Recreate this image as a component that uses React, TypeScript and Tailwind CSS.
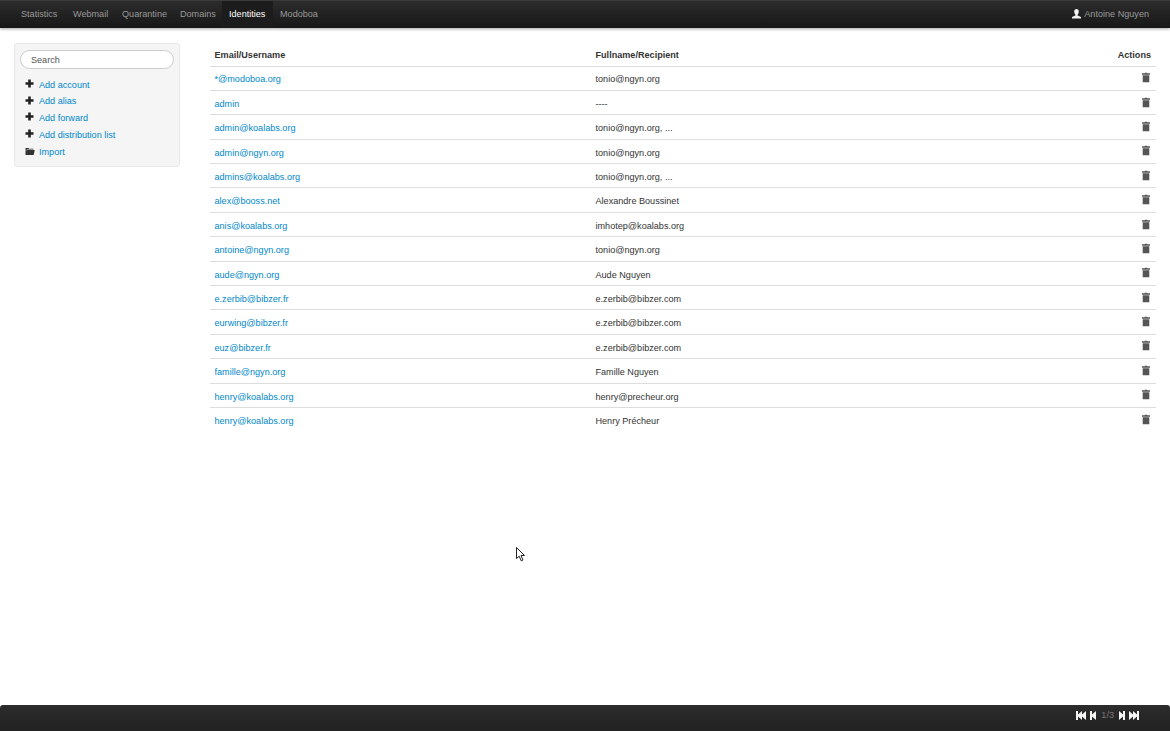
import React from 'react';

const font = { fontFamily: '"Liberation Sans", Arial, sans-serif' };

const navItems = [
  { label: 'Statistics', cls: 'w-[52px] text-[#999]' },
  { label: 'Webmail', cls: 'w-[49px] text-[#999]' },
  { label: 'Quarantine', cls: 'w-[58px] text-[#999]' },
  { label: 'Domains', cls: 'w-[49px] text-[#999]' },
  { label: 'Identities', cls: 'w-[51px] bg-[#1c1c1c] text-white' },
  { label: 'Modoboa', cls: 'w-[52px] text-[#999]' },
];

const rows = [
  ['*@modoboa.org', 'tonio@ngyn.org'],
  ['admin', '----'],
  ['admin@koalabs.org', 'tonio@ngyn.org, ...'],
  ['admin@ngyn.org', 'tonio@ngyn.org'],
  ['admins@koalabs.org', 'tonio@ngyn.org, ...'],
  ['alex@booss.net', 'Alexandre Boussinet'],
  ['anis@koalabs.org', 'imhotep@koalabs.org'],
  ['antoine@ngyn.org', 'tonio@ngyn.org'],
  ['aude@ngyn.org', 'Aude Nguyen'],
  ['e.zerbib@bibzer.fr', 'e.zerbib@bibzer.com'],
  ['eurwing@bibzer.fr', 'e.zerbib@bibzer.com'],
  ['euz@bibzer.fr', 'e.zerbib@bibzer.com'],
  ['famille@ngyn.org', 'Famille Nguyen'],
  ['henry@koalabs.org', 'henry@precheur.org'],
  ['henry@koalabs.org', 'Henry Précheur'],
];

const PlusIcon = () => (
  <svg width="9" height="9" viewBox="0 0 9 9" className="shrink-0 -translate-y-[2px]">
    <path d="M3.2 0.5h2.6v2.7h2.7v2.6H5.800v2.700H3.200V5.800H.5V3.200h2.700z" fill="#222" />
  </svg>
);

const FolderIcon = () => (
  <svg width="10" height="9" viewBox="0 0 10 9" className="shrink-0 -translate-y-[1px]">
    <path d="M0.500 2V1h3l.6.8h4.400v.7H2L.5 3.500z" fill="#333" />
    <path d="M2 3h7.700L8.700 8H.5V3.800z" fill="#333" />
  </svg>
);

const TrashIcon = () => (
  <svg width="8" height="10" viewBox="0 0 8 10">
    <path d="M2.800 0h2.400v.8H8v1.400H0V.8h2.800z" fill="#555" />
    <path d="M.7 2.800h6.600V10H.7z" fill="#555" />
  </svg>
);

const UserIcon = () => (
  <svg width="9" height="10" viewBox="0 0 9 10" className="shrink-0 -translate-y-[1px]">
    <path d="M4.500 0C6 0 6.800 1 6.800 2.600S6 5.500 5.600 5.800v.8L9 8v1.500H0V8l3.400-1.400v-.8C3 5.500 2.200 4.200 2.200 2.600S3 0 4.500 0z" fill="#f2f2f2" />
  </svg>
);

const SkipIcon = ({ flip, double }: { flip?: boolean; double?: boolean }) => (
  <svg width={double ? 10 : 6} height="9" viewBox={double ? '0 0 10 9' : '0 0 6 9'} style={flip ? { transform: 'scaleX(-1)' } : undefined}>
    {double ? (
      <path d="M0 0h2v3.500L6 0v3.500L10 0v9L6 5.500V9L2 5.500V9H0z" fill="#f5f5f5" />
    ) : (
      <path d="M0 0h2v3.500L6 0v9L2 5.500V9H0z" fill="#f5f5f5" />
    )}
  </svg>
);

const sideLinks = ['Add account', 'Add alias', 'Add forward', 'Add distribution list'];

export default function App() {
  return (
    <div className="relative flex h-[731px] flex-col overflow-hidden bg-white text-[9.100px] leading-[13.500px] text-[#333]" style={font}>
      {/* Top bar */}
      <header className="flex h-[28px] shrink-0 items-stretch justify-between border-t border-[#3a3a3a] bg-gradient-to-b from-[#2c2c2c] to-[#181818] pl-[14px] pr-[21px] shadow-[0_1px_3px_rgba(0,0,0,0.35)]">
        <nav className="flex">
          {navItems.map((item) => (
            <a key={item.label} className={`flex items-center pl-[7px] pt-[1px] ${item.cls}`}>
              {item.label}
            </a>
          ))}
        </nav>
        <div className="flex items-center gap-[3px] pt-[1px] text-[#999]">
          <UserIcon />
          <span>Antoine Nguyen</span>
        </div>
      </header>

      <main className="flex flex-1 items-start pl-[14px] pr-[14px] pt-[15px]">
        {/* Sidebar */}
        <aside className="w-[166px] shrink-0 rounded-[3px] border border-[#e8e8e8] bg-[#f5f5f5] px-[5px] pb-[5px] pt-[6px]">
          <div className="flex h-[19px] items-center rounded-full border border-[#ccc] bg-white pl-[10px] pt-[2px] text-[#555]">Search</div>
          <ul className="mt-[8px] flex flex-col">
            {sideLinks.map((l) => (
              <li key={l} className="flex h-[16.800px] items-center gap-[5px] pl-[5px]">
                <PlusIcon />
                <a className="text-[#0088cc]">{l}</a>
              </li>
            ))}
            <li className="flex h-[16.800px] items-center gap-[3px] pl-[5px]">
              <FolderIcon />
              <a className="ml-[1px] text-[#0088cc]">Import</a>
            </li>
          </ul>
        </aside>

        {/* Table */}
        <section className="ml-[30px] flex-1">
          <div className="flex h-[23.500px] items-center border-b border-[#ddd] pl-[4.500px] pr-[5px] pt-[2px] font-bold">
            <div className="w-[381px]">Email/Username</div>
            <div className="flex-1">Fullname/Recipient</div>
            <div>Actions</div>
          </div>
          {rows.map(([email, name], i) => (
            <div key={i} className="flex h-[24.400px] items-center border-b border-[#ddd] pl-[4.500px] pr-[4px] pt-[4px] last:border-b-0">
              <a className="w-[381px] text-[#0088cc]">{email}</a>
              <div className="flex-1">{name}</div>
              <div className="mr-[2px] -translate-y-[2.500px]">
                <TrashIcon />
              </div>
            </div>
          ))}
        </section>
      </main>

      {/* Bottom bar */}
      <footer className="flex h-[26px] shrink-0 items-center justify-end gap-[4px] rounded-t-[3px] bg-gradient-to-b from-[#2c2c2c] to-[#222] pb-[6px] pr-[31px]">
        <SkipIcon double />
        <SkipIcon />
        <span className="mx-[1px] pt-[2px] text-[#777]">1/3</span>
        <SkipIcon flip />
        <SkipIcon flip double />
      </footer>

      {/* Mouse cursor from the capture */}
      <svg width="10" height="15" viewBox="0 0 10 15" className="absolute left-[516px] top-[547px]">
        <path d="M.5.5v11l2.700-2.300 2 4.600 1.800-.8-2-4.500h3.500z" fill="#fff" stroke="#222" strokeWidth="1" />
      </svg>
    </div>
  );
}
